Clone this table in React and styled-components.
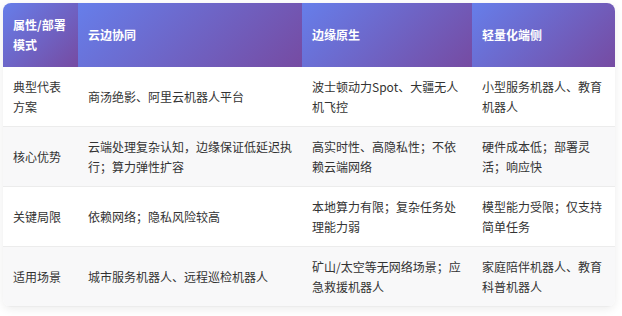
import React from "react";
import styled, { createGlobalStyle } from "styled-components";

const Global = createGlobalStyle`
  html, body { margin: 0; padding: 0; background: #ffffff; }
  body { font-family: "Noto Sans CJK SC", "Noto Sans", sans-serif; }
`;

const Page = styled.div`
  padding: 3px 7px 10px 3px;
`;

const Card = styled.div`
  width: 612px;
  border-radius: 8px;
  overflow: hidden;
  box-shadow: 0 2px 10px rgba(0, 0, 0, 0.08);
  background: #fff;
`;

const Table = styled.table`
  width: 100%;
  border-collapse: collapse;
  table-layout: fixed;
  font-size: 12px;
  line-height: 20px;
  color: #333;
`;

const Col = styled.col`
  width: ${(p) => p.$w}px;
`;

const Th = styled.th`
  background: linear-gradient(135deg, #667eea 0%, #764ba2 100%);
  color: #fff;
  font-weight: 700;
  text-align: left;
  vertical-align: middle;
  padding: 12px 10px;
`;

const Tr = styled.tr`
  background: ${(p) => (p.$alt ? "#f8f8f9" : "#ffffff")};
`;

const Td = styled.td`
  padding: 10px 10px 9px 10px;
  vertical-align: middle;
  border-bottom: 1px solid #ececec;
`;

const widths = [75, 224, 170, 143];
const headers = ["属性/部署模式", "云边协同", "边缘原生", "轻量化端侧"];
const rows = [
  ["典型代表方案", "商汤绝影、阿里云机器人平台", "波士顿动力Spot、大疆无人机飞控", "小型服务机器人、教育机器人"],
  ["核心优势", "云端处理复杂认知，边缘保证低延迟执行；算力弹性扩容", "高实时性、高隐私性；不依赖云端网络", "硬件成本低；部署灵活；响应快"],
  ["关键局限", "依赖网络；隐私风险较高", "本地算力有限；复杂任务处理能力弱", "模型能力受限；仅支持简单任务"],
  ["适用场景", "城市服务机器人、远程巡检机器人", "矿山/太空等无网络场景；应急救援机器人", "家庭陪伴机器人、教育科普机器人"],
];

export default function App() {
  return (
    <>
      <Global />
      <Page>
        <Card>
          <Table>
            <colgroup>
              {widths.map((w, i) => (
                <Col key={i} $w={w} />
              ))}
            </colgroup>
            <thead>
              <tr>
                {headers.map((h) => (
                  <Th key={h}>{h}</Th>
                ))}
              </tr>
            </thead>
            <tbody>
              {rows.map((r, i) => (
                <Tr key={i} $alt={i % 2 === 1}>
                  {r.map((c, j) => (
                    <Td key={j}>{c}</Td>
                  ))}
                </Tr>
              ))}
            </tbody>
          </Table>
        </Card>
      </Page>
    </>
  );
}
